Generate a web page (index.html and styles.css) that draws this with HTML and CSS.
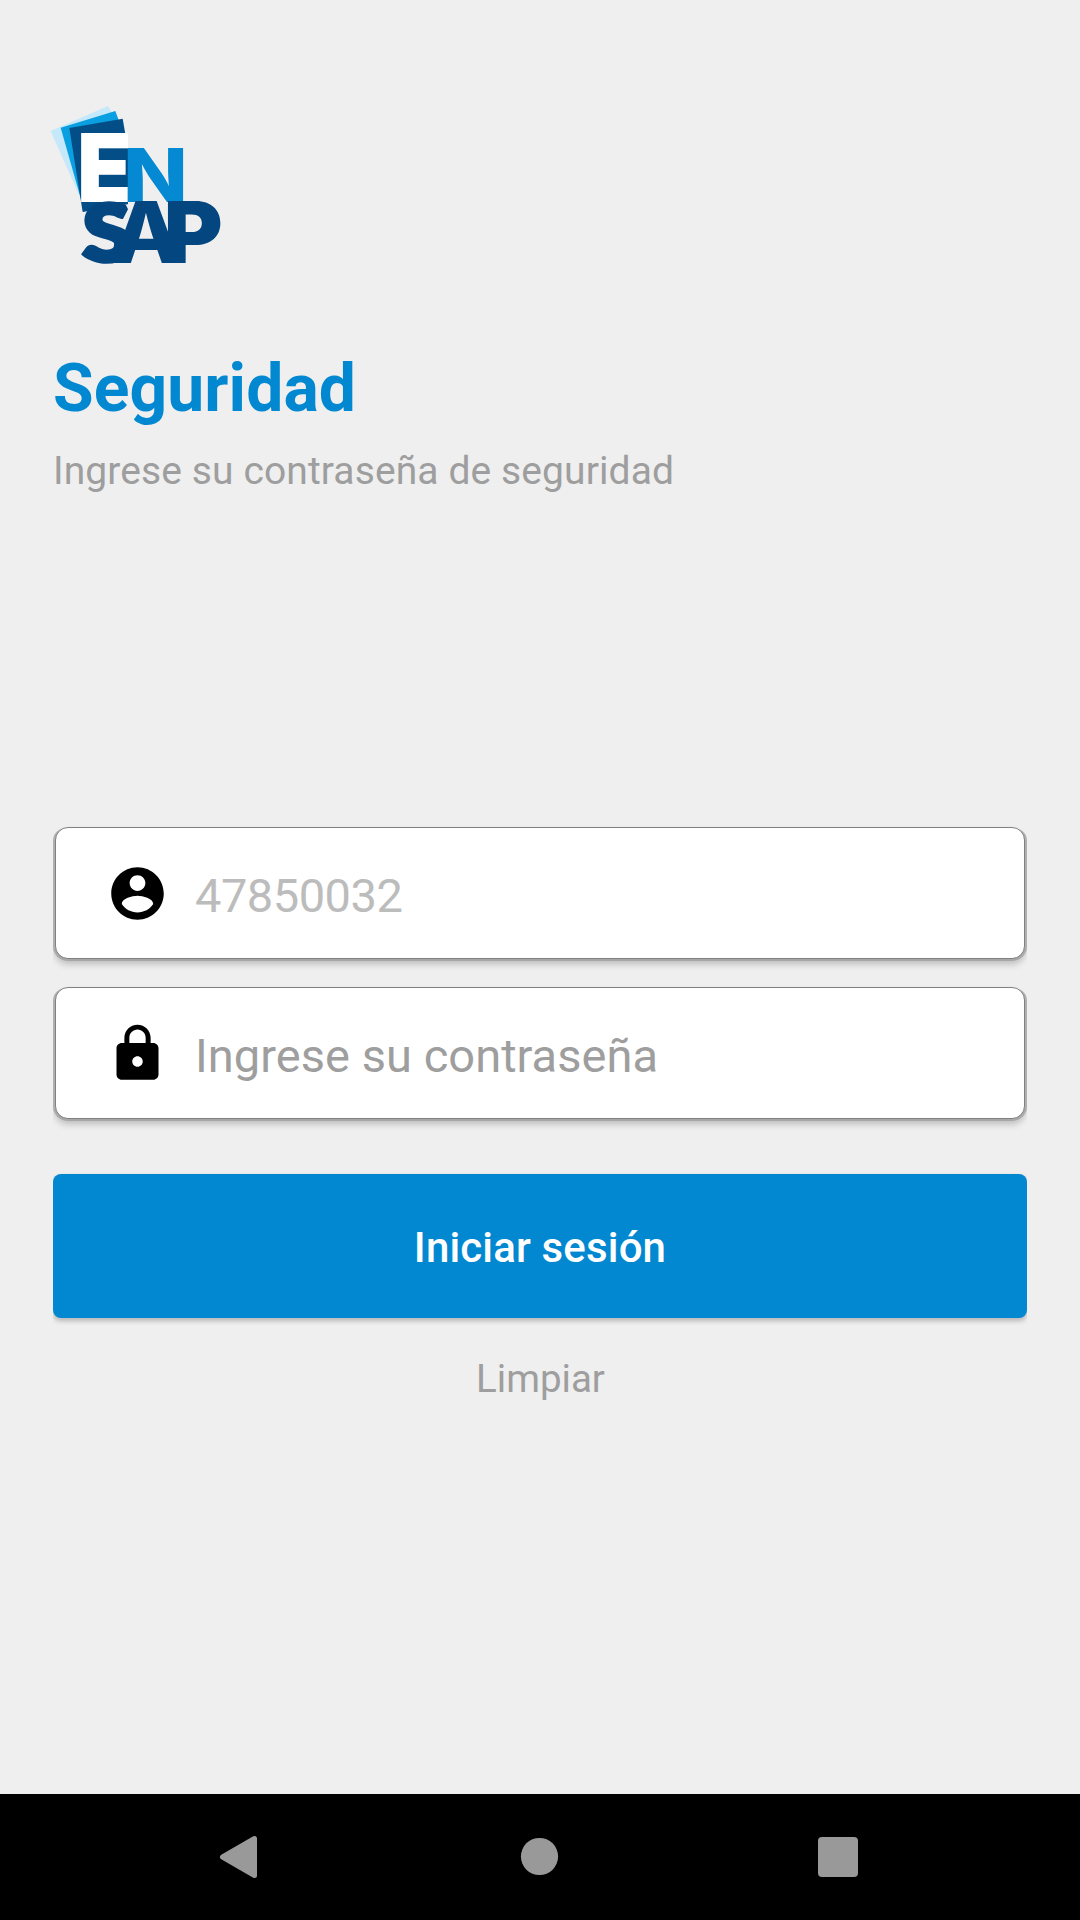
FILE: index.html
```html
<!DOCTYPE html>
<html lang="es">
<head>
<meta charset="utf-8">
<title>ENSAP - Seguridad</title>
<link rel="stylesheet" href="styles.css">
</head>
<body>
<main class="screen">
  <svg class="logo" viewBox="0 0 600 540" role="img" aria-label="ENSAP">
    <path fill="#c5e8fa" d="M32 105L204 30L250 110L123 310Z"/>
    <path fill="#0a9fe0" d="M62 95L226 45L250 110L123 310Z"/>
    <path fill="#044e87" d="M88 96L248 68L264 160V325L128 348Z"/>
    <g class="logo-text">
      <text fill="#fff" transform="translate(111 317) scale(.94 1)" font-size="285">E</text>
      <text class="logo-n" fill="#0489d2" transform="translate(249 317) scale(1.150 1)" font-size="221">N</text>
      <text class="logo-s" fill="#044680" stroke="#044680" stroke-width="14" transform="translate(128 495) scale(1.150 1)" font-size="236">S</text>
      <path fill="#efefef" d="M258 327L286 320L250 393L240 386L264 340Z"/>
      <text class="logo-a" fill="#044680" transform="translate(214 500) scale(1.080 1)" font-size="254">A</text>
      <text fill="#044680" transform="translate(371 500) scale(1.060 1)" font-size="254">P</text>
    </g>
  </svg>
  <h1 class="title">Seguridad</h1>
  <p class="subtitle">Ingrese su contraseña de seguridad</p>

  <form class="form">
    <div class="field-wrap">
      <label class="field">
        <svg class="field-icon" viewBox="0 0 24 24"><path d="M12 2C6.480 2 2 6.480 2 12s4.480 10 10 10 10-4.480 10-10S17.520 2 12 2zm0 3c1.660 0 3 1.340 3 3s-1.340 3-3 3-3-1.340-3-3 1.340-3 3-3zm0 14.200c-2.500 0-4.710-1.280-6-3.220.03-1.990 4-3.080 6-3.080 1.990 0 5.970 1.090 6 3.080-1.290 1.940-3.500 3.220-6 3.220z"/></svg>
        <input class="input input-user" type="text" value="47850032" disabled>
      </label>
    </div>
    <div class="field-wrap">
      <label class="field">
        <svg class="field-icon" viewBox="0 0 24 24"><path d="M18 8h-1V6c0-2.760-2.240-5-5-5S7 3.240 7 6v2H6c-1.100 0-2 .9-2 2v10c0 1.100.9 2 2 2h12c1.100 0 2-.9 2-2V10c0-1.100-.9-2-2-2zm-6 9c-1.100 0-2-.9-2-2s.9-2 2-2 2 .9 2 2-.9 2-2 2zm3.100-9H8.900V6c0-1.710 1.390-3.100 3.100-3.100s3.100 1.390 3.100 3.100v2z"/></svg>
        <input class="input" type="password" placeholder="Ingrese su contraseña">
      </label>
    </div>
    <div class="button-wrap"><button class="submit" type="button">Iniciar sesión</button></div>
    <button class="clear" type="button">Limpiar</button>
  </form>
</main>
<nav class="navbar">
  <svg class="nav-icon" viewBox="0 0 48 48"><path d="M6.500 24L38.500 5.500V42.500Z" stroke="#999" stroke-width="5" stroke-linejoin="round"/></svg>
  <svg class="nav-icon" viewBox="0 0 48 48"><circle cx="24.500" cy="23.500" r="18.600"/></svg>
  <svg class="nav-icon" viewBox="0 0 48 48"><rect x="4" y="4" width="40" height="40" rx="4"/></svg>
</nav>
</body>
</html>
```
FILE: styles.css
```css
* { box-sizing: border-box; }
body {
  margin: 0;
  height: 1920px;
  display: flex;
  flex-direction: column;
  background: #efefef;
  color: #9e9e9e;
  font-family: Roboto, sans-serif;
  overflow: hidden;
}
.screen {
  flex: 1;
  padding: 96px 53px 0;
}
.logo {
  display: block;
  width: 200px;
  height: 180px;
  margin-left: -13px;
  overflow: visible;
}
.logo-text {
  font-family: Inter, sans-serif;
  font-weight: 900;
}
.logo-n, .logo-a { font-weight: 800; }
.logo-s { font-family: Lato, sans-serif; }
.title {
  margin: 74px 0 0;
  color: #0288d1;
  font-size: 66px;
  font-weight: 700;
  line-height: 78px;
  letter-spacing: .1px;
}
.subtitle {
  margin: 20px 0 0;
  font-size: 39px;
  line-height: 46px;
  letter-spacing: .1px;
}
.form {
  display: flex;
  flex-direction: column;
  margin-top: 333px;
}
.field-wrap {
  padding: 0 2px;
  margin-bottom: 28px;
  clip-path: inset(-4px 0 -20px);
}
.field {
  display: flex;
  align-items: center;
  gap: 26px;
  height: 132px;
  padding: 0 50px;
  background: #fff;
  border: 1px solid #808080;
  border-radius: 13px;
  box-shadow: 0 2px 0 0 #a8a8a8, 2px 1px 0 0 #b0b0b0, -2px 1px 0 0 #b0b0b0, 0 5px 7px rgba(0, 0, 0, .22);
}
.field-icon {
  width: 63px;
  height: 63px;
  flex: none;
}
.input {
  flex: 1;
  min-width: 0;
  height: 60px;
  margin-top: 4px;
  padding: 0;
  border: 0;
  outline: 0;
  background: none;
  color: #9e9e9e;
  font: 400 47px/56px Roboto, sans-serif;
  letter-spacing: .04px;
}
.input::placeholder { color: #9e9e9e; opacity: 1; }
.input-user { color: #bcbcbc; letter-spacing: -.5px; }
.button-wrap {
  margin-top: 27px;
  clip-path: inset(-4px 0 -20px);
}
.submit {
  display: block;
  width: 100%;
  height: 144px;
  padding: 4px 0 0;
  border: 0;
  border-radius: 8px;
  background: #0288d1;
  box-shadow: 0 3px 5px rgba(0, 0, 0, .24);
  color: #fff;
  font: 500 42px/50px Roboto, sans-serif;
  letter-spacing: .15px;
}
.clear {
  align-self: center;
  margin-top: 38px;
  padding: 0 0 0 1px;
  border: 0;
  background: none;
  color: #9e9e9e;
  font: 400 38.5px/46px Roboto, sans-serif;
}
.navbar {
  display: flex;
  align-items: center;
  justify-content: center;
  gap: 251px;
  height: 126px;
  padding-right: 2px;
  background: #000;
}
.nav-icon {
  width: 48px;
  height: 48px;
  fill: #999;
}
```
